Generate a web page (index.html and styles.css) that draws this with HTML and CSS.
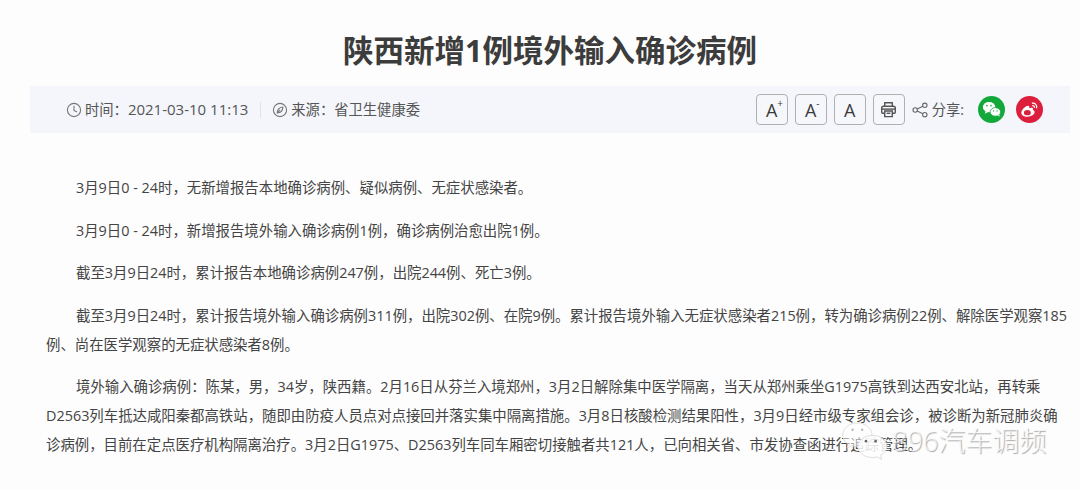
FILE: index.html
```html
<!DOCTYPE html>
<html lang="zh-CN">
<head>
<meta charset="utf-8">
<title>陕西新增1例境外输入确诊病例</title>
<link rel="stylesheet" href="styles.css">
</head>
<body>
<main class="article">
  <h1 class="title">陕西新增1例境外输入确诊病例</h1>
  <div class="meta">
    <div class="meta-left">
      <svg class="ico" viewBox="0 0 16 16"><circle cx="8" cy="8" r="6.600"/><path d="M8 3.800V8.400l3 1.600"/></svg>
      <span class="meta-text">时间：<span class="num">2021-03-10 11:13</span></span>
      <span class="sep"></span>
      <svg class="ico" viewBox="0 0 16 16"><circle cx="8" cy="8" r="6.600"/><path d="M5.200 11c0-3 2-5.600 5.600-6 0 3.400-2 5.800-5.600 6zM5.200 11l3-3.200"/></svg>
      <span class="meta-text">来源：省卫生健康委</span>
    </div>
    <div class="meta-right">
      <button class="btn"><span class="a">A<sup class="mark">+</sup></span></button>
      <button class="btn"><span class="a">A<sup class="mark">-</sup></span></button>
      <button class="btn"><span class="a">A</span></button>
      <button class="btn"><svg class="print" viewBox="0 0 18 18"><path d="M5 5.500V1.800h8v3.700"/><path d="M4.500 13H2.800c-.6 0-1-.4-1-1V7.500c0-1.200.8-2 2-2h10.400c1.200 0 2 .8 2 2V12c0 .6-.4 1-1 1h-1.700"/><path d="M1.800 8.600h14.400"/><path d="M5 10.500h8v6H5z"/><path d="M7 13h4"/></svg></button>
      <svg class="share" viewBox="0 0 16 16"><circle cx="12.800" cy="3.300" r="2.200"/><circle cx="3.200" cy="8" r="2.200"/><circle cx="12.800" cy="12.700" r="2.200"/><path d="M5.200 7l5.700-2.800M5.200 9l5.700 2.800"/></svg>
      <span class="meta-text share-label">分享:</span>
      <span class="round wechat"><svg viewBox="0 0 28 28"><ellipse cx="11.500" cy="11.500" rx="6.500" ry="5.300"/><path d="M8 15.500l-1 3 3.500-2z"/><ellipse class="front" cx="18" cy="16.500" rx="5.400" ry="4.400"/><path d="M20.500 20l2 1.500-.5-2.500z"/><circle class="eye" cx="9.300" cy="10" r=".8"/><circle class="eye" cx="13.500" cy="10" r=".8"/><circle class="eye" cx="16.200" cy="15.500" r=".7"/><circle class="eye" cx="19.800" cy="15.500" r=".7"/></svg></span>
      <span class="round weibo"><svg viewBox="0 0 28 28"><path d="M12 21.500c-3.800 0-6.500-1.700-6.500-4.200 0-2.800 4-7 7-7.300 1.500 0 1.600 1.500 1.200 2.600 2-.8 4-.8 4 .9 0 .4-.1.700-.3 1 1.200.4 1.900 1.200 1.900 2.200 0 2.500-3.500 4.800-7.300 4.800z"/><ellipse class="hole" cx="11.800" cy="17.300" rx="3.600" ry="2.700"/><path class="wave" d="M16.500 7.500c3.200-.7 5.800 2 4.800 5.200M16.900 10c1.500-.3 2.600.9 2.200 2.300"/></svg></span>
    </div>
  </div>
  <div class="content">
    <p>3月9日0 - 24时，无新增报告本地确诊病例、疑似病例、无症状感染者。</p>
    <p>3月9日0 - 24时，新增报告境外输入确诊病例1例，确诊病例治愈出院1例。</p>
    <p>截至3月9日24时，累计报告本地确诊病例247例，出院244例、死亡3例。</p>
    <p>截至3月9日24时，累计报告境外输入确诊病例311例，出院302例、在院9例。累计报告境外输入无症状感染者215例，转为确诊病例22例、解除医学观察185例、尚在医学观察的无症状感染者8例。</p>
    <p>境外输入确诊病例：陈某，男，34岁，陕西籍。2月16日从芬兰入境郑州，3月2日解除集中医学隔离，当天从郑州乘坐G1975高铁到达西安北站，再转乘D2563列车抵达咸阳秦都高铁站，随即由防疫人员点对点接回并落实集中隔离措施。3月8日核酸检测结果阳性，3月9日经市级专家组会诊，被诊断为新冠肺炎确诊病例，目前在定点医疗机构隔离治疗。3月2日G1975、D2563列车同车厢密切接触者共121人，已向相关省、市发协查函进行追踪管理。</p>
  </div>
</main>
<div class="watermark">
  <svg class="wm-icon" viewBox="0 0 50 40"><path class="back" d="M16 1C7.500 1 .8 6.500.8 13.500c0 4 2.200 7.500 5.700 9.800l-1.300 4 4.800-2.500c2 .5 3.800.8 6 .8 8.500 0 15.200-5.500 15.200-12.100S24.500 1 16 1z"/><path class="fore" d="M32 14c-8.500 0-15.500 5.200-15.500 11.500S23.500 37 32 37c1.700 0 3.300-.2 4.800-.6l4.700 2.600-1.300-4.300c4-2.100 6.500-5.400 6.500-9.200C46.700 19.200 40.500 14 32 14z"/><circle class="light" cx="11" cy="8" r="1.300"/><circle class="light" cx="21" cy="8" r="1.300"/><circle cx="25" cy="20" r="1.400"/><circle cx="35" cy="20" r="1.400"/></svg>
  <span class="wm-text">896汽车调频</span>
</div>
</body>
</html>
```
FILE: styles.css
```css
* { box-sizing: border-box; }
html, body { margin: 0; height: 490px; overflow: hidden; }
body {
  background: #fdfdfd;
  color: #444;
  font-family: "Open Sans", "Noto Sans CJK SC", sans-serif;
  position: relative;
}
.article { padding: 0 10px 0 30px; }
.title {
  margin: 0;
  height: 86px;
  padding-top: 27px;
  text-align: center;
  font-size: 30.500px;
  line-height: 46px;
  font-weight: 700;
  color: #3c3c3c;
}
.meta {
  height: 47px;
  background: #f4f6fb;
  display: flex;
  align-items: center;
  justify-content: space-between;
  padding: 0 27px 0 36px;
  color: #555;
}
.meta-left, .meta-right { display: flex; align-items: center; }
.meta-text { font-size: 14.300px; line-height: 20px; white-space: nowrap; }
.num { font-size: 15px; }
.ico { width: 16px; height: 16px; margin-right: 3px; fill: none; stroke: #777; stroke-width: 1.100; }
.sep { width: 1px; height: 16px; background: #dfe1e6; margin: 0 11px 0 12px; }
.btn {
  width: 32px; height: 31px; margin-right: 7px; padding: 0;
  border: 1px solid #b0b0b0; border-radius: 4px;
  background: #f6f7fb; color: #3c3c3c;
  display: flex; align-items: center; justify-content: center;
}
.a { font: 18px/20px "Open Sans", sans-serif; position: relative; }
.mark { position: absolute; left: 100%; top: -2px; font-size: 10px; line-height: 10px; margin: 0; }
.print { width: 17px; height: 17px; fill: none; stroke: #555; stroke-width: 1.500; }
.share { width: 16px; height: 16px; margin: 0 4px 0 0; fill: none; stroke: #666; stroke-width: 1.100; }
.share-label { margin-right: 14px; }
.round { width: 27px; height: 27px; border-radius: 50%; display: block; margin-right: 11px; }
.round:last-child { margin-right: 0; }
.round svg { display: block; width: 27px; height: 27px; }
.wechat { background: #12a83a; fill: #fff; }
.wechat .front { stroke: #12a83a; stroke-width: .8; }
.wechat .eye { fill: #12a83a; }
.weibo { background: #dc1f3c; fill: #fff; }
.weibo .hole { fill: #dc1f3c; }
.weibo .wave { fill: none; stroke: #fff; stroke-width: 1.300; }
.content { padding: 40px 0 0 16px; width: 1040px; }
.content p {
  margin: 0 0 13.500px;
  font-size: 14.400px;
  line-height: 29px;
  text-indent: 30px;
  color: #444;
}
.watermark {
  position: absolute;
  left: 842px;
  top: 421px;
  display: flex;
  align-items: center;
  gap: 2px;
}
.wm-icon { width: 48px; height: 38.400px; stroke: #d4d4d4; stroke-width: .8; }
.wm-icon .back { fill: rgba(255,255,255,.55); }
.wm-icon .fore { fill: rgba(255,255,255,.85); }
.wm-icon circle { fill: #666; stroke: none; }
.wm-icon .light { fill: #bbb; }
.wm-text {
  font-size: 27px;
  line-height: 40px;
  font-weight: 300;
  color: rgba(255,255,255,.7);
  text-shadow: 1px 1px 1px #aaa;
  white-space: nowrap;
}
```
